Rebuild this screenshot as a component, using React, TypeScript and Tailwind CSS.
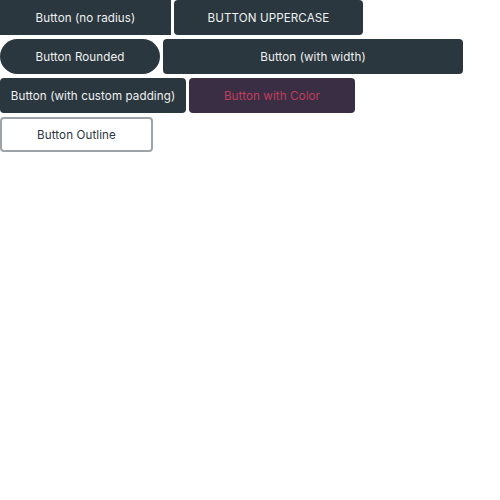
import React from "react";

const base =
  "h-[35px] flex items-center justify-center pt-[3px] text-[11.6px] font-normal tracking-[0.1px] leading-none whitespace-nowrap";

export default function App() {
  return (
    <div
      className="w-[500px] h-[500px] bg-white"
      style={{ fontFamily: "Inter, 'Open Sans', sans-serif" }}
    >
      <div className="flex flex-wrap gap-x-[3px] gap-y-[4px] w-[500px]">
        <button className={`${base} w-[171px] bg-[#2b373e] text-[#eef0f1]`}>
          Button (no radius)
        </button>
        <button className={`${base} w-[189px] rounded-[4px] bg-[#2b373e] text-[#eef0f1]`}>
          BUTTON UPPERCASE
        </button>
        <button className={`${base} w-[160px] rounded-full bg-[#2b373e] text-[#eef0f1]`}>
          Button Rounded
        </button>
        <button className={`${base} w-[300px] rounded-[4px] bg-[#2b373e] text-[#eef0f1]`}>
          Button (with width)
        </button>
        <button className={`${base} w-[186px] rounded-[4px] bg-[#2b373e] text-[#eef0f1]`}>
          Button (with custom padding)
        </button>
        <button className={`${base} w-[166px] rounded-[4px] bg-[#3a2e45] text-[#c23d5e]`}>
          Button with Color
        </button>
        <button
          className={`${base} w-[153px] rounded-[4px] bg-white border-2 border-[#9ea3a7] text-[#2b373e]`}
        >
          Button Outline
        </button>
      </div>
    </div>
  );
}
